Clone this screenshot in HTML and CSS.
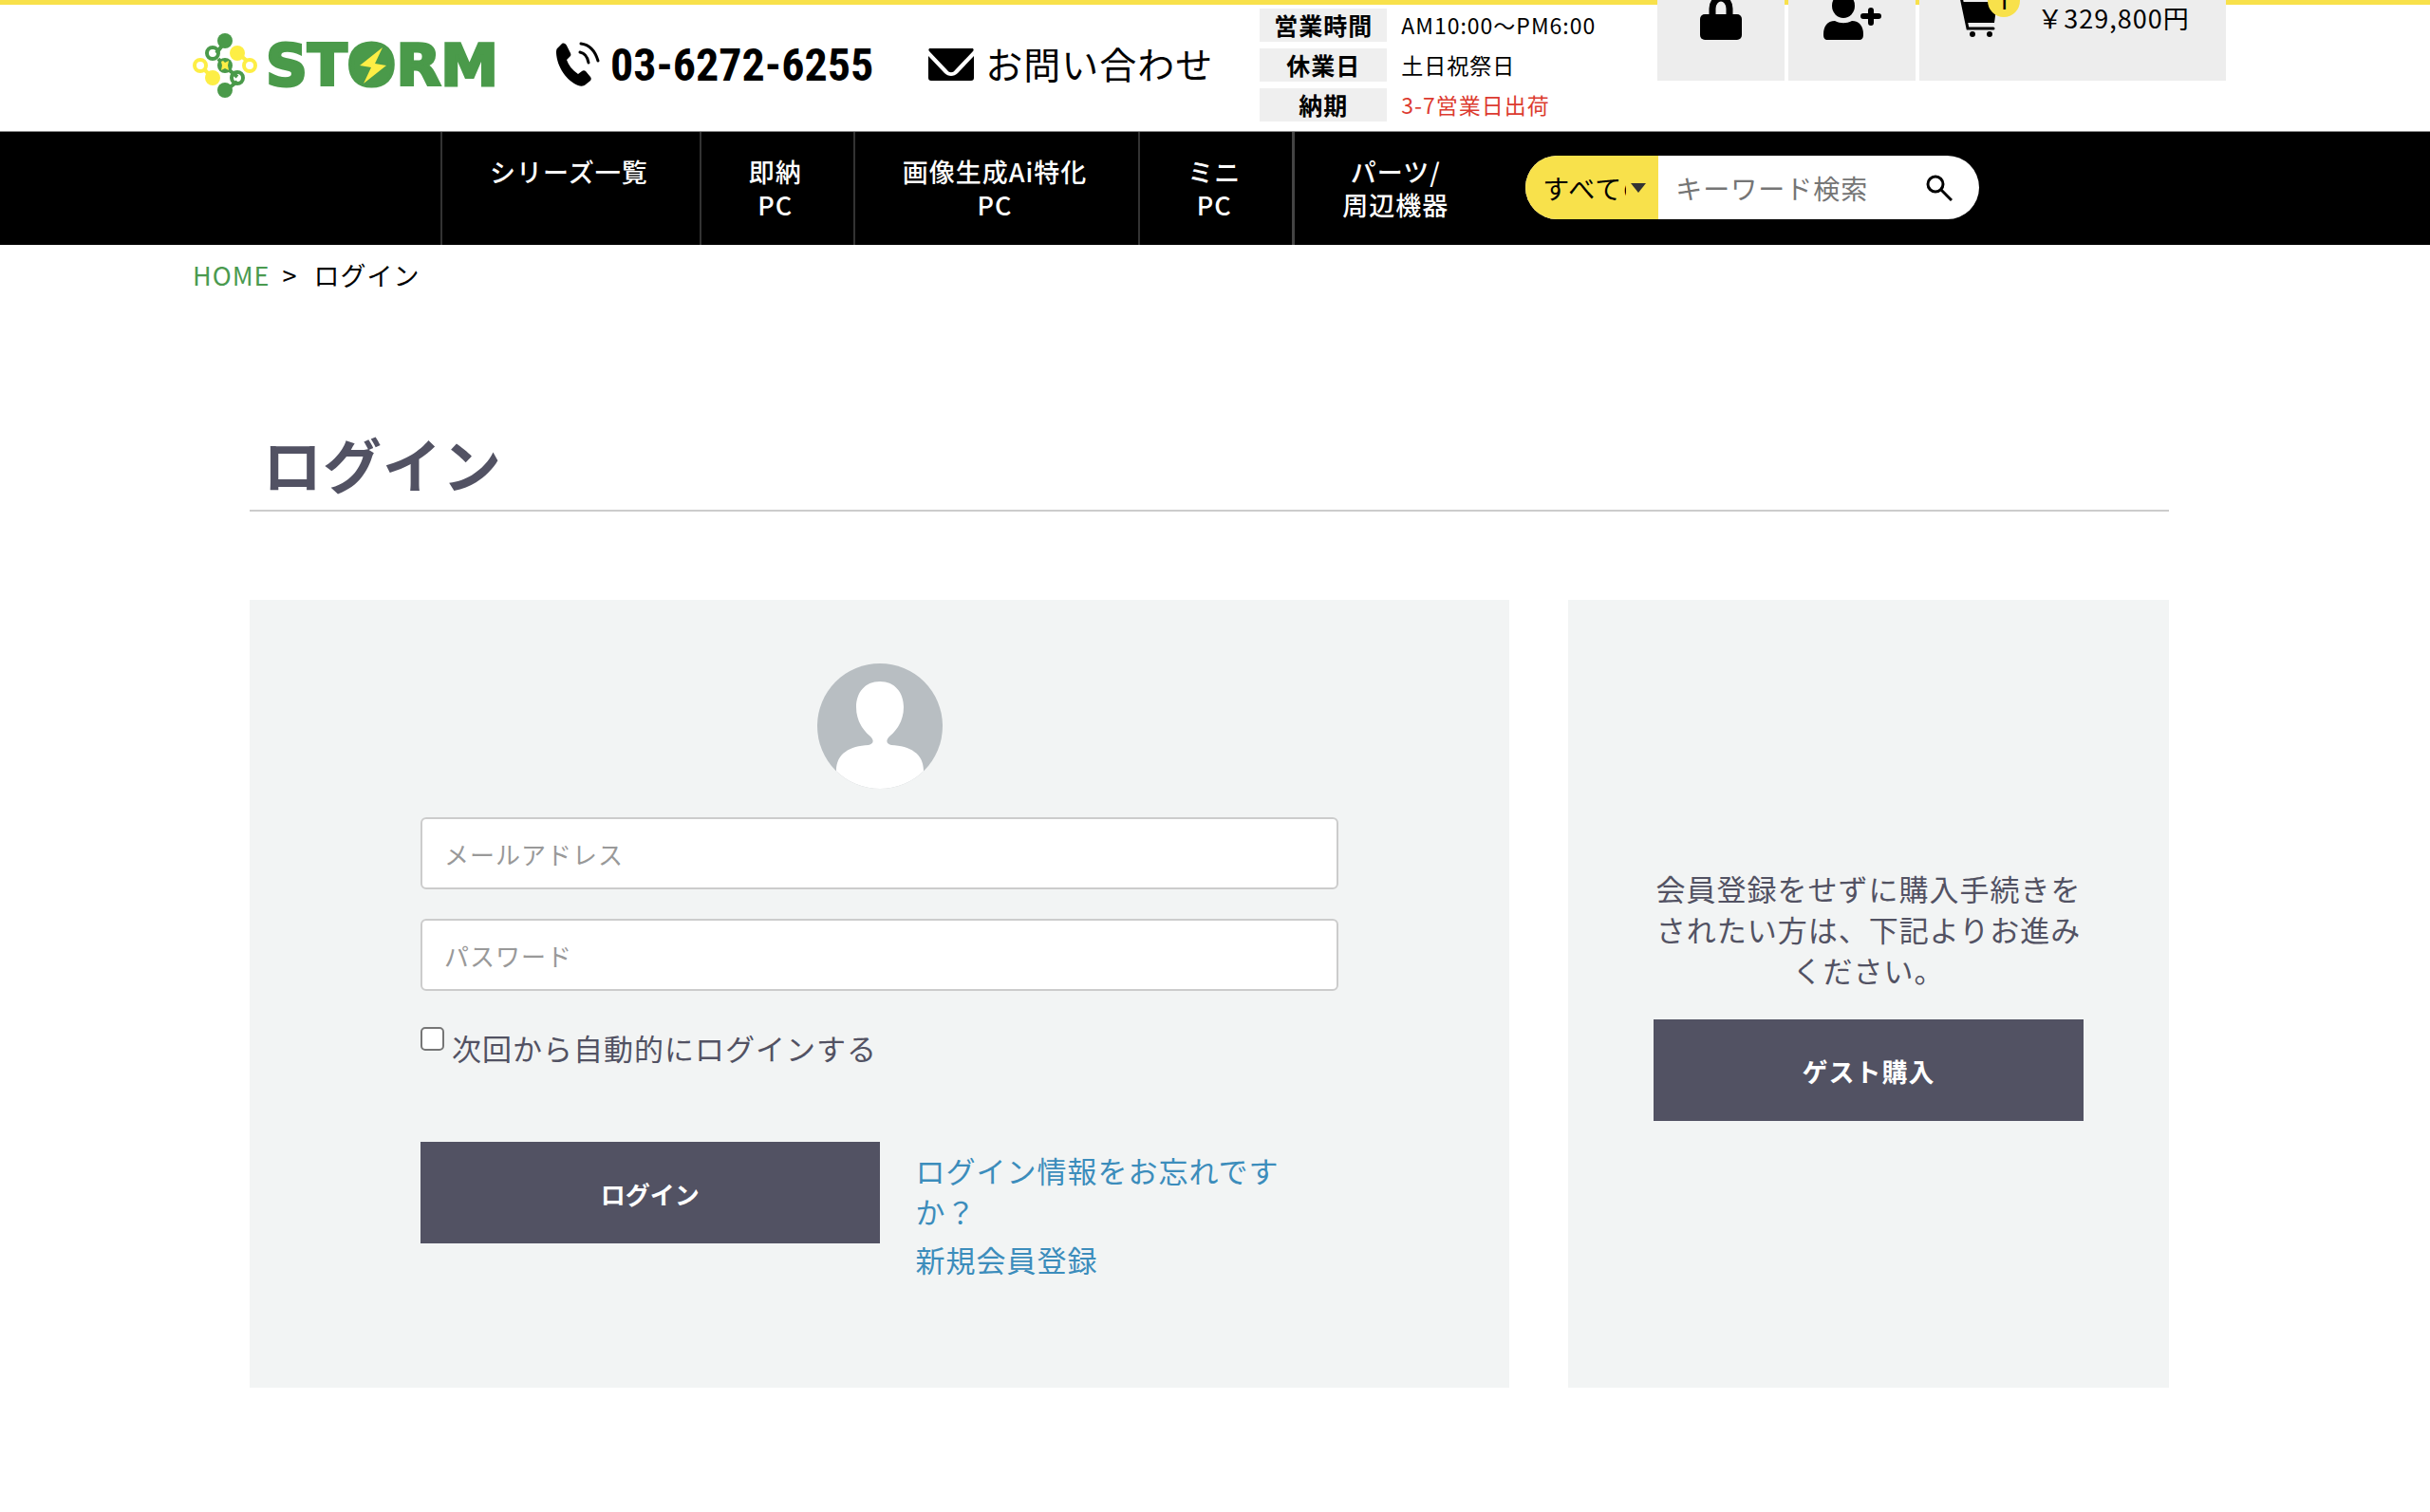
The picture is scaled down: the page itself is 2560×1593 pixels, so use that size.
FILE: index.html
```html
<!DOCTYPE html>
<html lang="ja">
<head>
<meta charset="utf-8">
<meta name="viewport" content="width=device-width, initial-scale=1">
<title>ログイン | STORM</title>
<link rel="stylesheet" href="styles.css">
</head>
<body>
<header class="header">
  <a class="logo" href="#" aria-label="STORM">
    <svg class="logo-art" viewBox="0 0 324 72" width="324" height="72">
      <g fill="none" stroke="#4a9a4a" stroke-width="4">
        <path d="M34 10 25 22M27 28 34 36 47 47M47 52 35 61"/>
        <circle cx="21" cy="22" r="6"/>
        <circle cx="47" cy="48" r="6"/>
      </g>
      <g fill="none" stroke="#fdee45" stroke-width="4">
        <path d="M12 39 20 47M50 24 57 30"/>
        <circle cx="8" cy="35" r="6"/>
        <circle cx="60" cy="35" r="6"/>
      </g>
      <g fill="#4a9a4a">
        <circle cx="34" cy="9" r="8"/>
        <circle cx="34" cy="35" r="8"/>
        <circle cx="34" cy="61" r="8"/>
      </g>
      <g fill="#fdee45">
        <circle cx="47" cy="22" r="8"/>
        <circle cx="21" cy="48" r="8"/>
        <path d="m32 30 2 2 4-2-1 5 1 5-4-2-4 2 1-5-1-4z"/>
      </g>
      <text class="logo-word" x="77" y="56">STORM</text>
      <ellipse cx="188" cy="34" rx="18" ry="18" fill="#4a9a4a"/>
      <path d="m200 16-24 19 12 2-8 17 24-19-12-2z" fill="#fdee45"/>
    </svg>
  </a>
  <a class="phone" href="tel:0362726255">
    <svg viewBox="0 0 48 48" width="48" height="48">
      <path d="M7 2c2-1 4 0 5 2l4 8c1 2 0 3-1 4l-3 3c2 6 6 11 12 15l4-3c1-1 3-1 4 0l5 6c1 1 1 3 0 4l-5 4c-2 2-5 2-8 1C12 41 2 27 1 12c0-2 0-4 1-5z"/>
      <path d="M27 2c9 1 15 8 18 18M26 11c5 1 8 5 9 11" fill="none" stroke="#000" stroke-width="3" stroke-linecap="round"/>
    </svg>
    <span>03-6272-6255</span>
  </a>
  <a class="contact" href="#">
    <svg viewBox="0 0 48 34" width="48" height="34">
      <path d="M2 0h44c2 0 2 2 1 3L28 23c-2 3-6 3-8 0L1 3C0 2 0 0 2 0z"/>
      <path d="M0 8l17 18c4 4 10 4 14 0L48 8v23c0 2-1 3-3 3H3c-2 0-3-1-3-3z"/>
    </svg>
    <span>お問い合わせ</span>
  </a>
  <table class="hours">
    <tr><th scope="row">営業時間</th><td>AM10:00〜PM6:00</td></tr>
    <tr><th scope="row">休業日</th><td>土日祝祭日</td></tr>
    <tr><th scope="row">納期</th><td class="alert">3-7営業日出荷</td></tr>
  </table>
  <nav class="tools" aria-label="会員メニュー">
    <a class="tool" href="#" aria-label="ログイン">
      <svg viewBox="0 0 44 56" width="44" height="56">
        <path d="M13 30V23a9 11 0 0 1 18 0v7" fill="none" stroke="#000" stroke-width="7"/>
        <rect y="29" width="44" height="27" rx="5"/>
      </svg>
    </a>
    <a class="tool" href="#" aria-label="新規会員登録">
      <svg viewBox="0 0 61 56" width="61" height="56">
        <ellipse cx="21" cy="20" rx="12" ry="13"/>
        <path d="M12 36c6 3 12 3 18 0 8 0 12 6 12 14 0 4-1 6-5 6H5c-4 0-5-2-5-6 0-8 4-14 12-14z"/>
        <path d="M50 25v13M42 31h16" stroke="#000" stroke-width="6" stroke-linecap="round"/>
      </svg>
    </a>
    <a class="tool tool-cart" href="#">
      <span class="cart">
        <svg viewBox="0 0 44 56" width="44" height="56">
          <path d="M0 6h5l8 38h27" fill="none" stroke="#000" stroke-width="3" stroke-linecap="round"/>
          <path d="M8 16h36l-3 22H12z"/>
          <circle cx="18" cy="50" r="3"/>
          <circle cx="36" cy="50" r="3"/>
        </svg>
        <span class="badge">1</span>
      </span>
      <span class="price">￥329,800円</span>
    </a>
  </nav>
</header>

<nav class="menu" aria-label="商品メニュー">
  <a class="menu-item" href="#">シリーズ一覧</a>
  <a class="menu-item" href="#">即納<br>PC</a>
  <a class="menu-item" href="#">画像生成Ai特化<br>PC</a>
  <a class="menu-item" href="#">ミニ<br>PC</a>
  <a class="menu-item menu-last" href="#">パーツ/<br>周辺機器</a>
  <form class="search" role="search">
    <span class="category">
      <select class="category-select" aria-label="カテゴリー"><option>すべての商品</option></select>
      <svg class="caret" viewBox="0 0 16 10" width="16" height="10"><path d="M0 0h16L8 10z"/></svg>
    </span>
    <input class="keyword" type="search" placeholder="キーワード検索" aria-label="キーワード検索">
    <button class="search-btn" type="submit" aria-label="検索">
      <svg viewBox="0 0 28 28" width="28" height="28" fill="none" stroke="#000" stroke-width="3"><circle cx="10" cy="10" r="8"/><path d="m16 16 11 11"/></svg>
    </button>
  </form>
</nav>

<nav class="crumbs" aria-label="パンくず">
  <a href="#">HOME</a><span>&gt;</span><span class="current">ログイン</span>
</nav>

<main class="main">
  <h1 class="title">ログイン</h1>
  <div class="panels">
    <section class="panel">
      <form class="login">
        <svg class="avatar" viewBox="0 0 132 132" width="132" height="132">
          <defs><clipPath id="round"><circle cx="66" cy="66" r="66"/></clipPath></defs>
          <g clip-path="url(#round)">
            <rect width="132" height="132" fill="#b8bec2"/>
            <path d="M66 19c16 0 25 12 25 27 0 14-7 24-14 30-5 4-5 9 1 10 20 1 34 9 34 27v19H20v-19c0-18 14-26 34-27 6-1 6-6 1-10-7-6-14-16-14-30 0-15 9-27 25-27z" fill="#fff"/>
          </g>
        </svg>
        <input class="field" type="email" placeholder="メールアドレス" aria-label="メールアドレス">
        <input class="field" type="password" placeholder="パスワード" aria-label="パスワード">
        <div class="remember">
          <input class="check" type="checkbox" id="memory">
          <label for="memory">次回から自動的にログインする</label>
        </div>
        <div class="actions">
          <button class="btn btn-login" type="submit">ログイン</button>
          <div class="links">
            <a href="#">ログイン情報をお忘れですか？</a>
            <a href="#">新規会員登録</a>
          </div>
        </div>
      </form>
    </section>
    <section class="panel guest">
      <p class="guest-text">会員登録をせずに購入手続きをされたい方は、下記よりお進みください。</p>
      <button class="btn" type="button">ゲスト購入</button>
    </section>
  </div>
</main>
</body>
</html>
```

FILE: styles.css
```css
* {
  box-sizing: border-box;
}

body {
  margin: 0;
  background: #fff;
  color: #000;
  font-family: "Noto Sans CJK JP", "Noto Sans", sans-serif;
  font-size: 27px;
  letter-spacing: 1px;
}

a {
  color: inherit;
  text-decoration: none;
}

svg {
  display: block;
  flex: none;
}

input,
select,
button {
  margin: 0;
  border: 0;
  padding: 0;
  color: inherit;
  font: inherit;
  letter-spacing: inherit;
}

/* Header */
.header {
  display: flex;
  align-items: flex-start;
  height: 138px;
  padding: 0 215px 0 203px;
  border-top: 5px solid #f8e14b;
  white-space: nowrap;
}

.logo {
  margin-top: 29px;
}

.logo-word {
  fill: #4a9a4a;
  stroke: #4a9a4a;
  stroke-width: 3px;
  font-family: "DejaVu Sans", sans-serif;
  font-size: 61px;
  font-weight: 700;
  letter-spacing: 0;
}

.phone,
.contact {
  display: flex;
  align-items: center;
  height: 64px;
  margin-top: 31px;
}

.phone {
  gap: 10px;
  margin-left: 58px;
  font-family: "Roboto Condensed", "Liberation Sans", sans-serif;
  font-size: 48px;
  font-weight: 700;
  letter-spacing: 0;
}

.contact {
  gap: 12px;
  margin-left: 58px;
  font-size: 39px;
}

.contact span {
  padding-bottom: 5px;
}

.hours {
  margin: -3px 0 0 49px;
  border-spacing: 0 7px;
  font-size: 23px;
  line-height: 35px;
}

.hours th {
  width: 134px;
  padding: 0;
  background: #efefef;
  font-size: 25px;
}

.hours td {
  padding: 0 0 0 15px;
}

.hours .alert {
  color: #dc3b30;
}

.tools {
  display: flex;
  gap: 4px;
  height: 127px;
  margin: -47px 0 0 auto;
}

.tool {
  display: flex;
  align-items: center;
  justify-content: center;
  width: 134px;
  padding-bottom: 16px;
  background: #ededed;
}

.tool-cart {
  gap: 42px;
  width: 323px;
}

.price {
  padding-top: 10px;
}

.cart {
  position: relative;
}

.badge {
  position: absolute;
  top: -2px;
  right: -24px;
  width: 34px;
  height: 34px;
  border-radius: 50%;
  background: #f8e14b;
  font-family: Roboto, sans-serif;
  line-height: 34px;
  text-align: center;
}

/* Menu bar */
.menu {
  display: flex;
  height: 120px;
  padding-left: 464px;
  border-top: 1px solid #888;
  background: #000;
  white-space: nowrap;
}

.menu-item {
  padding: 24px 54px 0 50px;
  border-left: 2px solid #333;
  color: #fff;
  font-weight: 500;
  line-height: 35px;
  text-align: center;
}

.menu-last {
  border-left: 3px solid #444;
}

.search {
  display: flex;
  align-items: center;
  width: 478px;
  height: 67px;
  margin: 25px 0 0 27px;
  border-radius: 34px;
  overflow: hidden;
  background: #fff;
  font-size: 28px;
}

.category {
  position: relative;
  flex: none;
  width: 140px;
  height: 67px;
}

.category-select {
  appearance: none;
  width: 140px;
  height: 67px;
  padding: 0 34px 0 18px;
  border-radius: 0;
  background: #f8e14b;
}

.caret {
  position: absolute;
  top: 29px;
  right: 13px;
  fill: #333;
  pointer-events: none;
}

.keyword {
  flex: 1;
  min-width: 0;
  height: 67px;
  padding-left: 18px;
  background: transparent;
}

.keyword::placeholder {
  color: #757575;
}

.search-btn {
  padding: 0 28px 0 12px;
  background: none;
}

/* Breadcrumbs */
.crumbs {
  display: flex;
  gap: 13px;
  padding: 12px 0 0 203px;
  line-height: 40px;
}

.crumbs a {
  color: #4a9a4f;
}

.current {
  padding-left: 4px;
}

/* Login */
.main {
  padding: 136px 275px 128px 263px;
  color: #525263;
}

.title {
  margin: 0 0 93px;
  padding: 0 14px 7px;
  border-bottom: 2px solid #ccc;
  font-size: 62px;
  line-height: 84px;
}

.panels {
  display: grid;
  grid-template-columns: 1327fr 633fr;
  gap: 62px;
}

.panel {
  padding: 67px 180px 114px;
  background: #f2f4f4;
  font-size: 31px;
  line-height: 43px;
}

.avatar {
  margin: 0 auto 30px;
}

.field {
  display: block;
  width: 100%;
  height: 76px;
  margin-bottom: 31px;
  padding: 0 23px;
  border: 2px solid #ccc;
  border-radius: 6px;
  background: #fff;
  font-size: 26px;
}

.field::placeholder {
  color: #999;
}

.remember {
  display: flex;
  align-items: flex-start;
  gap: 8px;
  margin: 38px 0 78px;
}

.check {
  appearance: none;
  width: 25px;
  height: 25px;
  border: 2px solid #767676;
  border-radius: 5px;
  background: #fff;
}

.check:checked {
  background: #525263;
}

.btn {
  display: block;
  width: 100%;
  height: 107px;
  padding-top: 2px;
  background: #525263;
  color: #fff;
  font-size: 27px;
  font-weight: 700;
}

.btn-login {
  font-size: 26px;
  letter-spacing: 0;
}

.actions {
  display: grid;
  grid-template-columns: 1fr 1fr;
}

.links {
  display: flex;
  flex-direction: column;
  gap: 8px;
  padding: 8px 38px 0;
  color: #3c8dbc;
}

.guest {
  display: flex;
  flex-direction: column;
  justify-content: center;
  padding: 0 90px;
  text-align: center;
}

.guest-text {
  margin: 0 0 31px;
}
```
